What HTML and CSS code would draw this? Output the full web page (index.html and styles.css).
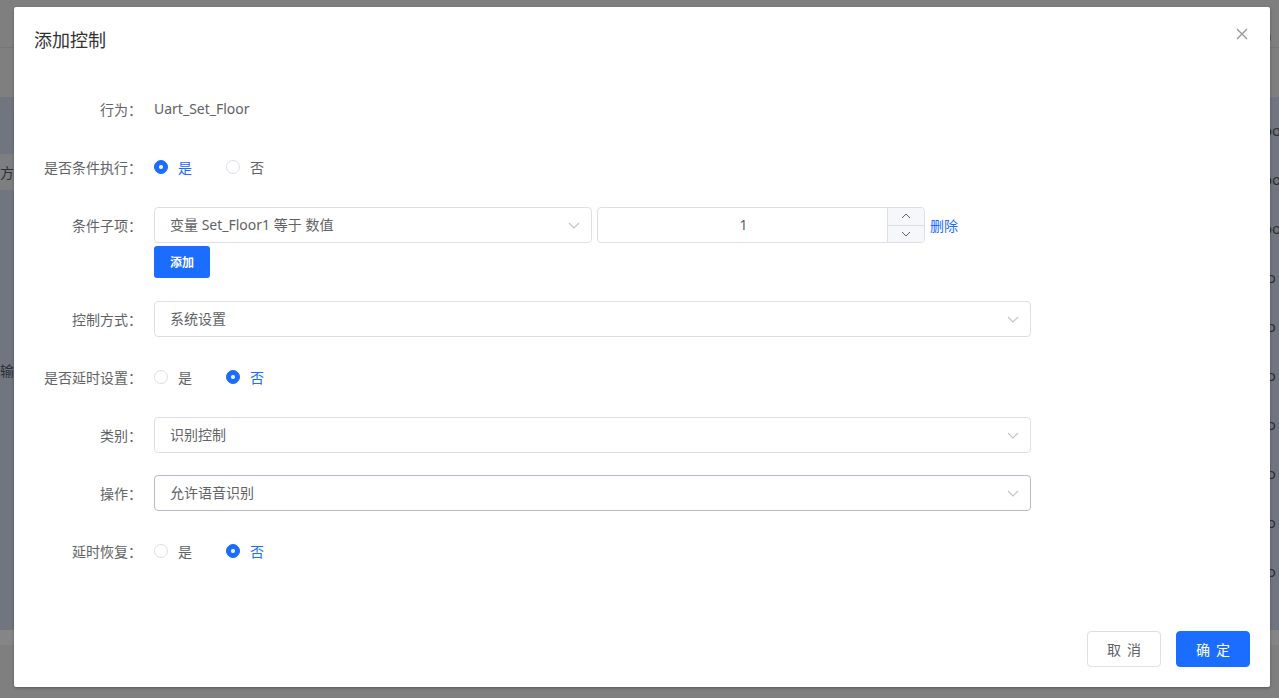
FILE: index.html
```html
<!DOCTYPE html>
<html lang="zh-CN">
<head>
<meta charset="utf-8">
<title>添加控制</title>
<link rel="stylesheet" href="styles.css">
</head>
<body>
<div class="page">
  <div class="page-top">
    <div class="top-row"><span class="edge-r">a</span></div>
    <div class="top-row2"></div>
  </div>
  <div class="page-main">
    <div class="col-left">
      <div class="lrow first"></div>
      <div class="lrow hl"><span class="edge-l">方</span></div>
      <div class="lrow gap"></div>
      <div class="lrow"><span class="edge-l">输</span></div>
    </div>
    <div class="col-mid"></div>
    <div class="col-right">
      <div class="rrow"><span class="edge-r">oo</span></div>
      <div class="rrow"><span class="edge-r">oo</span></div>
      <div class="rrow"><span class="edge-r">oo</span></div>
      <div class="rrow"><span class="edge-r">lo</span></div>
      <div class="rrow"><span class="edge-r">lo</span></div>
      <div class="rrow"><span class="edge-r">lo</span></div>
      <div class="rrow"><span class="edge-r">lo</span></div>
      <div class="rrow"><span class="edge-r">lo</span></div>
      <div class="rrow"><span class="edge-r">lo</span></div>
      <div class="rrow"><span class="edge-r">lo</span></div>
    </div>
  </div>
  <div class="page-foot"></div>
</div>

<div class="dialog">
  <div class="dlg-header">
    <span class="dlg-title">添加控制</span>
    <svg class="dlg-close" width="12" height="12" viewBox="0 0 12 12"><path d="M1 1L11 11M11 1L1 11" stroke="#909399" stroke-width="1.2" fill="none"/></svg>
  </div>
  <div class="dlg-body">
    <div class="form-item">
      <label class="form-label">行为：</label>
      <div class="form-content"><span class="plain">Uart_Set_Floor</span></div>
    </div>
    <div class="form-item">
      <label class="form-label">是否条件执行：</label>
      <div class="form-content row">
        <span class="radio checked"><span class="radio-dot"></span><span class="radio-text">是</span></span>
        <span class="radio"><span class="radio-dot"></span><span class="radio-text">否</span></span>
      </div>
    </div>
    <div class="form-item">
      <label class="form-label">条件子项：</label>
      <div class="form-content">
        <div class="cond-line">
          <div class="select w-short">
            <span class="select-text">变量 Set_Floor1 等于 数值</span>
            <svg class="chev" width="12" height="7" viewBox="0 0 12 7"><path d="M1 1L6 6L11 1" stroke="#c0c4cc" stroke-width="1.1" fill="none"/></svg>
          </div>
          <div class="num-input">
            <span class="num-value">1</span>
            <div class="num-ctrl">
              <span class="num-btn"><svg width="10" height="6" viewBox="0 0 10 6"><path d="M1 5L5 1L9 5" stroke="#606266" stroke-width="1" fill="none"/></svg></span>
              <span class="num-btn"><svg width="10" height="6" viewBox="0 0 10 6"><path d="M1 1L5 5L9 1" stroke="#606266" stroke-width="1" fill="none"/></svg></span>
            </div>
          </div>
          <span class="link">删除</span>
        </div>
        <button class="btn-add">添加</button>
      </div>
    </div>
    <div class="form-item">
      <label class="form-label">控制方式：</label>
      <div class="form-content">
        <div class="select w-full">
          <span class="select-text">系统设置</span>
          <svg class="chev" width="12" height="7" viewBox="0 0 12 7"><path d="M1 1L6 6L11 1" stroke="#c0c4cc" stroke-width="1.1" fill="none"/></svg>
        </div>
      </div>
    </div>
    <div class="form-item">
      <label class="form-label">是否延时设置：</label>
      <div class="form-content row">
        <span class="radio"><span class="radio-dot"></span><span class="radio-text">是</span></span>
        <span class="radio checked"><span class="radio-dot"></span><span class="radio-text">否</span></span>
      </div>
    </div>
    <div class="form-item">
      <label class="form-label">类别：</label>
      <div class="form-content">
        <div class="select w-full">
          <span class="select-text">识别控制</span>
          <svg class="chev" width="12" height="7" viewBox="0 0 12 7"><path d="M1 1L6 6L11 1" stroke="#c0c4cc" stroke-width="1.1" fill="none"/></svg>
        </div>
      </div>
    </div>
    <div class="form-item">
      <label class="form-label">操作：</label>
      <div class="form-content">
        <div class="select w-full hover">
          <span class="select-text">允许语音识别</span>
          <svg class="chev" width="12" height="7" viewBox="0 0 12 7"><path d="M1 1L6 6L11 1" stroke="#c0c4cc" stroke-width="1.1" fill="none"/></svg>
        </div>
      </div>
    </div>
    <div class="form-item">
      <label class="form-label">延时恢复：</label>
      <div class="form-content row">
        <span class="radio"><span class="radio-dot"></span><span class="radio-text">是</span></span>
        <span class="radio checked"><span class="radio-dot"></span><span class="radio-text">否</span></span>
      </div>
    </div>
  </div>
  <div class="dlg-footer">
    <button class="btn btn-default">取 消</button>
    <button class="btn btn-primary">确 定</button>
  </div>
</div>
</body>
</html>
```
FILE: styles.css
```css
* { box-sizing: border-box; }
html, body { margin: 0; padding: 0; }
body {
  width: 1279px;
  height: 698px;
  overflow: hidden;
  background: #7f7f7f;
  font-family: "Noto Sans", "Noto Sans CJK SC", sans-serif;
  font-size: 14px;
  color: #606266;
  position: relative;
}

/* background page (under overlay) */
.page { width: 1279px; height: 698px; display: flex; flex-direction: column; }
.page-top { height: 97px; background: #7f7f7f; display: flex; flex-direction: column; }
.top-row { height: 48px; border-bottom: 1px solid #777; display: flex; align-items: flex-end; }
.top-row2 { flex: 1; }
.page-main { height: 533px; display: flex; }
.col-left { width: 60px; background: #71757f; display: flex; flex-direction: column; }
.lrow { height: 49px; display: flex; align-items: center; }
.lrow.first { height: 57px; }
.lrow.hl { height: 36px; background: #7d7e80; }
.lrow.gap { height: 155px; }
.col-mid { flex: 1; background: #71757f; }
.col-right { width: 60px; background: #71757f; padding-top: 8px; display: flex; flex-direction: column; }
.rrow { height: 49px; display: flex; align-items: center; }
.page-foot { flex: 1; background: #7f7f7f; border-top: 15px solid #858585; }
.edge-l { font-size: 14px; color: #2c2f36; font-family: "Noto Sans CJK SC", sans-serif; }
.edge-r { margin-left: auto; width: 14px; overflow: hidden; white-space: nowrap; text-indent: -2px; color: #2c2f36; font-size: 15px; }
.top-row .edge-r { margin-bottom: 2px; }

/* dialog */
.dialog {
  position: absolute;
  left: 14px;
  top: 7px;
  width: 1256px;
  height: 680px;
  background: #fff;
  border-radius: 2px;
  box-shadow: 0 1px 3px rgba(0,0,0,0.3);
  display: flex;
  flex-direction: column;
}
.dlg-header {
  padding: 20px 20px 10px;
  display: flex;
  justify-content: space-between;
  align-items: center;
}
.dlg-title { font-size: 18px; line-height: 24px; color: #303133; font-family: "Noto Sans CJK SC", sans-serif; }
.dlg-close { margin-top: -10px; margin-right: 2px; }
.dlg-body { padding: 30px 20px 0; flex: 1; }

.form-item { display: flex; margin-bottom: 22px; }
.form-label {
  width: 120px;
  flex: none;
  text-align: right;
  padding-right: 12px;
  line-height: 36px;
  font-size: 14px;
  color: #606266;
  font-family: "Noto Sans CJK SC", sans-serif;
}
.form-content { line-height: 36px; display: flex; flex-direction: column; align-items: flex-start; }
.form-content.row { flex-direction: row; align-items: center; height: 36px; }
.plain { color: #606266; font-size: 14px; }

.radio { display: inline-flex; align-items: center; margin-right: 34px; }
.radio-dot {
  width: 14px; height: 14px; border-radius: 50%;
  border: 1px solid #dcdfe6; background: #fff;
  position: relative;
}
.radio.checked .radio-dot { background: #1b6dff; border-color: #1b6dff; }
.radio.checked .radio-dot::after {
  content: ""; position: absolute; left: 50%; top: 50%;
  width: 4px; height: 4px; margin: -2px 0 0 -2px; border-radius: 50%; background: #fff;
}
.radio-text { padding-left: 10px; font-size: 14px; color: #606266; font-family: "Noto Sans CJK SC", sans-serif; }
.radio.checked .radio-text { color: #1b6dff; }

.cond-line { display: flex; align-items: center; }
.select {
  height: 36px;
  border: 1px solid #dcdfe6;
  border-radius: 4px;
  display: flex;
  align-items: center;
  justify-content: space-between;
  padding: 0 11px 0 15px;
  background: #fff;
}
.select.hover { border-color: #b9bcc6; }
.select-text { font-size: 14px; color: #606266; line-height: 34px; }
.w-short { width: 438px; }
.w-full { width: 877px; }
.chev { flex: none; }

.num-input {
  margin-left: 5px;
  width: 328px;
  height: 36px;
  border: 1px solid #dcdfe6;
  border-radius: 4px;
  display: flex;
  overflow: hidden;
}
.num-value { flex: 1; text-align: center; line-height: 34px; color: #606266; font-size: 14px; padding-left: 2px; }
.num-ctrl { width: 37px; display: flex; flex-direction: column; border-left: 1px solid #dcdfe6; background: #f5f7fa; }
.num-btn { flex: 1; display: flex; align-items: center; justify-content: center; }
.num-btn:first-child { border-bottom: 1px solid #dcdfe6; }
.link { margin-left: 5px; color: #1b6dff; font-size: 14px; font-family: "Noto Sans CJK SC", sans-serif; line-height: 36px; }

.btn-add {
  margin-top: 3px;
  margin-bottom: 1px;
  height: 32px;
  width: 56px;
  border: none;
  border-radius: 3px;
  background: #1b6dff;
  color: #fff;
  font-size: 12px;
  font-weight: bold;
  font-family: "Noto Sans CJK SC", sans-serif;
  padding: 0;
  line-height: 32px;
}

.dlg-footer { padding: 0 20px 20px; display: flex; justify-content: flex-end; gap: 15px; }
.btn {
  width: 74px; height: 36px; border-radius: 4px; font-size: 14px;
  font-family: "Noto Sans CJK SC", sans-serif; padding: 0; line-height: 34px;
  word-spacing: 3px;
}
.btn-default { background: #fff; border: 1px solid #dcdfe6; color: #606266; }
.btn-primary { background: #1b6dff; border: 1px solid #1b6dff; color: #fff; }
```
